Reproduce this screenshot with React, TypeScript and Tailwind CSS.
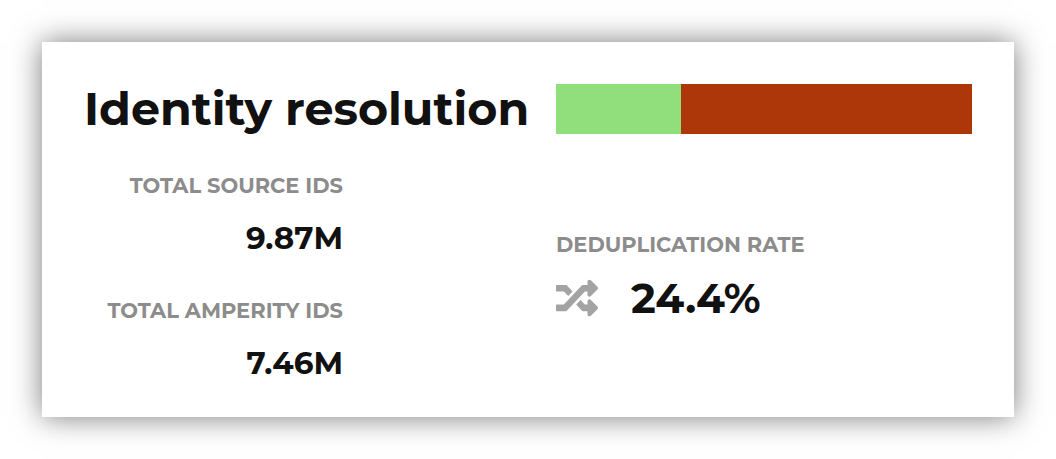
import { FaRandom } from "react-icons/fa";

type StatProps = { label: string; value: string };

function Stat({ label, value }: StatProps) {
  return (
    <div>
      <dt className="text-[21px] leading-8 font-bold text-[#8c8c8c] uppercase">{label}</dt>
      <dd className="mt-4 text-[31px] leading-10 font-bold">{value}</dd>
    </div>
  );
}

export default function App() {
  return (
    <main className="bg-white p-[42px] font-['Montserrat','Inter',sans-serif] text-[#111]">
      <section className="grid grid-cols-[472px_1fr] bg-white px-[42px] pt-[42px] pb-[34px] shadow-[0_0_28px_rgba(0,0,0,0.52)]">
        <h1 className="text-[46px] leading-[50px] font-bold whitespace-nowrap">Identity resolution</h1>
        <div className="flex h-[50px]" role="img" aria-label="Identity resolution share">
          <div className="w-[30%] bg-[#90df7c]" />
          <div className="flex-1 bg-[#ae370a]" />
        </div>
        <dl className="mt-9 w-[259px] space-y-[37px] text-right whitespace-nowrap">
          <Stat label="Total source IDs" value="9.87M" />
          <Stat label="Total Amperity IDs" value="7.46M" />
        </dl>
        <dl className="mt-[95px]">
          <dt className="text-[21px] leading-8 font-bold text-[#8c8c8c] uppercase">Deduplication rate</dt>
          <dd className="mt-3 flex items-center gap-[33px] text-[42px] leading-[50px] font-bold">
            <FaRandom className="size-[42px] text-[#a3a3a3]" aria-hidden="true" />
            24.4%
          </dd>
        </dl>
      </section>
    </main>
  );
}
